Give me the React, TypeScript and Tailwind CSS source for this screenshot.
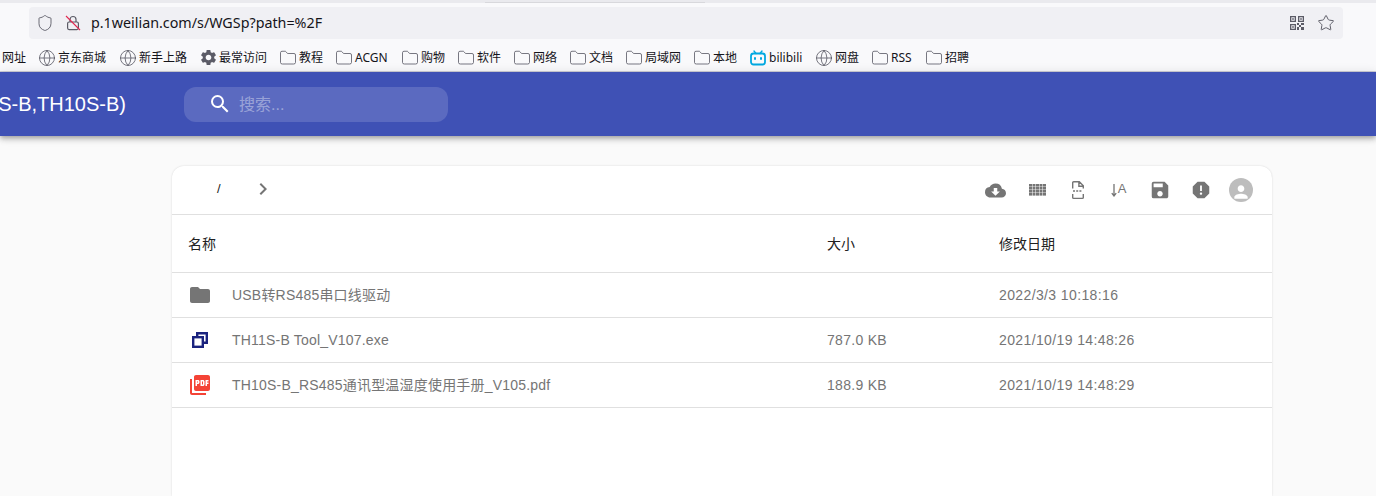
import React from "react";
import { Folder, Globe, Shield, Star } from "lucide-react";
import {
  MdChevronRight,
  MdCloudDownload,
  MdFolder,
  MdPerson,
  MdPictureAsPdf,
  MdReport,
  MdSave,
  MdSearch,
  MdSettings,
} from "react-icons/md";

const sans = "font-['Liberation_Sans','Noto_Sans_CJK_SC',sans-serif]";
const ui = "font-['Noto_Sans','Noto_Sans_CJK_SC',sans-serif]";

const bookmarks: { kind: string; label: string; w: number }[] = [
  { kind: "globe", label: "京东商城", w: 49 },
  { kind: "globe", label: "新手上路", w: 48 },
  { kind: "gear", label: "最常访问", w: 48 },
  { kind: "folder", label: "教程", w: 24 },
  { kind: "folder", label: "ACGN", w: 34 },
  { kind: "folder", label: "购物", w: 24 },
  { kind: "folder", label: "软件", w: 24 },
  { kind: "folder", label: "网络", w: 24 },
  { kind: "folder", label: "文档", w: 24 },
  { kind: "folder", label: "局域网", w: 36 },
  { kind: "folder", label: "本地", w: 24 },
  { kind: "bili", label: "bilibili", w: 34 },
  { kind: "globe", label: "网盘", w: 24 },
  { kind: "folder", label: "RSS", w: 22 },
  { kind: "folder", label: "招聘", w: 24 },
];

const BiliIcon = () => (
  <svg width="16" height="16" viewBox="0 0 16 16" fill="none">
    <path d="M4 1l2 2.5M12 1l-2 2.5" stroke="#00a8e0" strokeWidth="1.4" strokeLinecap="round" />
    <rect x="1" y="3.5" width="14" height="11" rx="2.5" stroke="#00a8e0" strokeWidth="1.8" />
    <rect x="4" y="7" width="2" height="3" rx="1" fill="#00a8e0" />
    <rect x="10" y="7" width="2" height="3" rx="1" fill="#00a8e0" />
  </svg>
);

const BookmarkIcon = ({ kind }: { kind: string }) => {
  if (kind === "globe") return <Globe size={18} strokeWidth={1.1} className="-m-px text-[#5b5b66]" />;
  if (kind === "gear") return <MdSettings size={19} className="-m-[1.5px] text-[#5b5b66]" />;
  if (kind === "bili") return <BiliIcon />;
  return <Folder size={18} strokeWidth={1.1} className="-m-px text-[#5b5b66]" />;
};

const QrIcon = () => (
  <svg width="16" height="16" viewBox="0 0 16 16" fill="#5b5b66">
    <path d="M1 1h6v6H1zM2.3 2.3v3.4h3.4V2.3zM9 1h6v6H9zM10.3 2.3v3.4h3.4V2.3zM1 9h6v6H1zM2.3 10.3v3.4h3.4v-3.4z" fillRule="evenodd" />
    <path d="M3.2 3.2h1.6v1.6H3.2zM11.2 3.2h1.6v1.6h-1.6zM3.2 11.2h1.6v1.6H3.2z" />
    <path d="M8 8h2v2H8zM10 10h2v2h-2zM12 8h3v2h-3zM8 12h2v3H8zM12 12h3v3h-3z" />
  </svg>
);

const LockOffIcon = () => (
  <svg width="16" height="16" viewBox="0 0 16 16" fill="none">
    <path d="M5 7V4.5a3 3 0 0 1 6 0V7" stroke="#5b5b66" strokeWidth="1.2" />
    <rect x="2.6" y="7" width="10.8" height="7.6" rx="1.5" stroke="#5b5b66" strokeWidth="1.2" />
    <path d="M1 1l14 14" stroke="#e22850" strokeWidth="1.1" />
  </svg>
);

const GridIcon = () => (
  <svg width="17" height="12" viewBox="0 0 17 12" fill="#757575" className="ml-px">
    {[0, 1, 2, 3].map((r) =>
      [0, 1, 2, 3, 4].map((c) => <rect key={`${r}-${c}`} x={c * 3.5} y={r * 3} width="3" height="2.6" />)
    )}
  </svg>
);

const FileDashedIcon = () => (
  <svg width="20" height="20" viewBox="0 0 20 20" fill="none" stroke="#757575" strokeWidth="1.4">
    <path d="M4.7 8.5V2.8q0-1 1-1h5.6l4 4v2.7M10.9 2v4.2h4.2" />
    <path d="M5 11h2M8.2 11h2M11.4 11h2" strokeWidth="1.5" />
    <path d="M4.7 14v3.4q0 1 1 1h8.6q1 0 1-1V14" />
  </svg>
);

const SortIcon = () => (
  <div className="flex h-5 items-center">
    <svg width="6" height="13" viewBox="0 0 6 13" fill="none" stroke="#757575" strokeWidth="1.3">
      <path d="M3 0v11.5M.8 9.2L3 12l2.2-2.8" />
    </svg>
    <span className={`${sans} ml-px -mt-[3px] text-[13px] leading-none text-[#757575]`}>A</span>
  </div>
);

const ExeIcon = () => (
  <svg width="24" height="24" viewBox="0 0 24 24" fill="none" stroke="#1a237e" strokeWidth="2.4">
    <path d="M9.2 8V5.2h9.6v9.6H16" />
    <rect x="5.2" y="9.2" width="9.6" height="9.6" />
  </svg>
);

const rows = [
  { name: "USB转RS485串口线驱动", size: "", date: "2022/3/3 10:18:16", icon: <MdFolder size={24} className="text-[#757575]" /> },
  { name: "TH11S-B Tool_V107.exe", size: "787.0 KB", date: "2021/10/19 14:48:26", icon: <ExeIcon /> },
  { name: "TH10S-B_RS485通讯型温湿度使用手册_V105.pdf", size: "188.9 KB", date: "2021/10/19 14:48:29", icon: <MdPictureAsPdf size={24} className="text-[#f44336]" /> },
];

const toolIcons = [
  <MdCloudDownload size={21} className="text-[#757575]" />,
  <GridIcon />,
  <FileDashedIcon />,
  <SortIcon />,
  <MdSave size={22} className="text-[#757575]" />,
  <MdReport size={22} className="text-[#757575]" />,
];

export default function App() {
  return (
    <div className="flex h-[496px] w-[1376px] flex-col overflow-hidden bg-[#fafafa]">
      {/* browser chrome */}
      <div className="flex h-[3px] items-end bg-[#eaeaee] pl-[485px]">
        <div className="h-px w-[220px] bg-[#d8d8dc]" />
      </div>
      <div className="flex h-[69px] flex-col border-b border-[#cfcfd8] bg-[#f9f9fb]">
        <div className="mt-1 ml-[29px] flex h-8 w-[1314px] items-center rounded-[4px] bg-[#f0f0f4] pr-2 pl-[7px]">
          <Shield size={18} strokeWidth={1.2} className="text-[#5b5b66]" />
          <div className="ml-[11px]">
            <LockOffIcon />
          </div>
          <span className={`${ui} ml-[10px] text-[14.3px] text-[#15141a]`}>p.1weilian.com/s/WGSp?path=%2F</span>
          <div className="ml-auto flex items-center gap-[12px]">
            <QrIcon />
            <Star size={18} strokeWidth={1.3} className="text-[#5b5b66]" />
          </div>
        </div>
        <div className="relative mt-2 flex h-[21px] items-center pl-[39px]">
          <span className={`${ui} absolute left-[2px] text-[12px] text-[#15141a]`}>网址</span>
          <div className="flex items-center gap-[13px]">
            {bookmarks.map((b) => (
              <div key={b.label} className="flex items-center gap-[3px]">
                <BookmarkIcon kind={b.kind} />
                <span className={`${ui} whitespace-nowrap text-[12px] leading-4 text-[#15141a]`} style={{ width: b.w }}>
                  {b.label}
                </span>
              </div>
            ))}
          </div>
        </div>
      </div>

      {/* app bar */}
      <div className="z-10 flex h-16 shrink-0 items-center bg-[#3f51b5] shadow-[0_2px_4px_-1px_rgba(0,0,0,0.2),0_4px_5px_0_rgba(0,0,0,0.14),0_1px_10px_0_rgba(0,0,0,0.12)]">
        <div className="flex w-[126px] justify-end overflow-hidden">
          <span className={`${sans} whitespace-nowrap text-[20px] text-white`}>(TH11S-B,TH10S-B)</span>
        </div>
        <div className="ml-[58px] flex h-[35px] w-[264px] items-center rounded-[12px] bg-white/15 pl-[24px]">
          <MdSearch size={24} className="text-white" />
          <span className={`${sans} mt-[2px] ml-[7px] text-[16px] text-white/40`}>搜索...</span>
        </div>
      </div>

      {/* file card */}
      <div className="mt-[30px] ml-[172px] w-[1100px] flex-1 rounded-t-[12px] bg-white shadow-[0_0_2px_rgba(0,0,0,0.15)]">
        <div className="flex h-[49px] items-center border-b border-[#e0e0e0] pr-[19px] pl-[45px]">
          <span className={`${sans} -mt-[3px] text-[13px] text-[#212121]`}>/</span>
          <MdChevronRight size={24} className="-mt-[3px] ml-[30px] text-[#757575]" />
          <div className="ml-auto flex items-center">
            {toolIcons.map((icon, i) => (
              <div key={i} className="flex w-[41px] justify-center">
                {icon}
              </div>
            ))}
            <div className="ml-[8px] flex h-6 w-6 items-end justify-center overflow-hidden rounded-full bg-[#bdbdbd]">
              <MdPerson size={20} className="text-white" />
            </div>
          </div>
        </div>
        <div className={`${sans} grid h-[58px] grid-cols-[639px_172px_1fr] items-center border-b border-[#e0e0e0] pt-px pl-4 text-[14px] text-[#212121]`}>
          <span>名称</span>
          <span>大小</span>
          <span>修改日期</span>
        </div>
        {rows.map((r) => (
          <div key={r.name} className={`${sans} grid h-[45px] grid-cols-[639px_172px_1fr] items-center border-b border-[#e0e0e0] pl-4 text-[14px] text-[#757575]`}>
            <div className="flex items-center">
              <div className="flex w-[44px] shrink-0 items-center">{r.icon}</div>
              <span className="tracking-[0.2px]">{r.name}</span>
            </div>
            <span className="tracking-[0.3px]">{r.size}</span>
            <span className="tracking-[0.38px]">{r.date}</span>
          </div>
        ))}
      </div>
    </div>
  );
}
